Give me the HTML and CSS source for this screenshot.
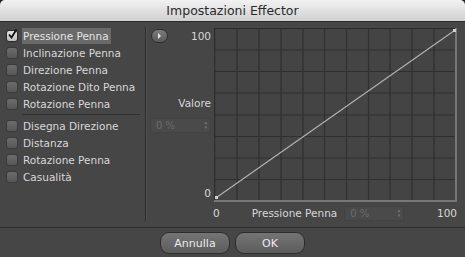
FILE: index.html
```html
<!DOCTYPE html>
<html lang="it">
<head>
    <meta charset="UTF-8">
    <title>Impostazioni Effector</title>
    <link rel="stylesheet" href="styles.css">
</head>
<body>
    <div class="window">
        <div class="titlebar">Impostazioni Effector</div>

        <div class="main">
            <div class="options">
                <div class="option active">
                    <span class="check checked">
                        <svg width="13" height="13" viewBox="0 0 13 13"><path d="M3 6.5 L5.5 9.5 L10.5 1.5" fill="none" stroke="#111" stroke-width="1.8"/></svg>
                    </span>
                    <span class="name">Pressione Penna</span>
                </div>
                <div class="option"><span class="check"></span><span class="name">Inclinazione Penna</span></div>
                <div class="option"><span class="check"></span><span class="name">Direzione Penna</span></div>
                <div class="option"><span class="check"></span><span class="name">Rotazione Dito Penna</span></div>
                <div class="option"><span class="check"></span><span class="name">Rotazione Penna</span></div>
                <div class="divider"></div>
                <div class="option"><span class="check"></span><span class="name">Disegna Direzione</span></div>
                <div class="option"><span class="check"></span><span class="name">Distanza</span></div>
                <div class="option"><span class="check"></span><span class="name">Rotazione Penna</span></div>
                <div class="option"><span class="check"></span><span class="name">Casualità</span></div>
            </div>

            <div class="curve">
                <div class="y-axis">
                    <div class="y-top">
                        <button class="play"><svg width="5" height="6" viewBox="0 0 5 6"><path d="M1 0 L4 3 L1 6 Z" fill="#e6e6e6"/></svg></button>
                        <span>100</span>
                    </div>
                    <div class="y-label">Valore</div>
                    <div class="field y-field">0 %<span class="stepper">&#x25B4;<br>&#x25BE;</span></div>
                    <div class="y-zero">0</div>
                </div>

                <svg class="plot" width="243" height="174" viewBox="0 0 243 174">
                    <rect x="0" y="0" width="243" height="174" fill="#444444"/>
                    <g stroke="#303030" stroke-width="1.2">
                        <line x1="23" y1="0" x2="23" y2="172"/>
                        <line x1="45" y1="0" x2="45" y2="172"/>
                        <line x1="67" y1="0" x2="67" y2="172"/>
                        <line x1="89" y1="0" x2="89" y2="172"/>
                        <line x1="110.5" y1="0" x2="110.5" y2="172"/>
                        <line x1="132.5" y1="0" x2="132.5" y2="172"/>
                        <line x1="154.5" y1="0" x2="154.5" y2="172"/>
                        <line x1="176" y1="0" x2="176" y2="172"/>
                        <line x1="198" y1="0" x2="198" y2="172"/>
                        <line x1="220" y1="0" x2="220" y2="172"/>
                        <line x1="0" y1="22" x2="241" y2="22"/>
                        <line x1="0" y1="43.5" x2="241" y2="43.5"/>
                        <line x1="0" y1="65" x2="241" y2="65"/>
                        <line x1="0" y1="87" x2="241" y2="87"/>
                        <line x1="0" y1="108.5" x2="241" y2="108.5"/>
                        <line x1="0" y1="130" x2="241" y2="130"/>
                        <line x1="0" y1="151.5" x2="241" y2="151.5"/>
                    </g>
                    <line x1="0" y1="0.5" x2="241" y2="0.5" stroke="#2c2c2c"/>
                    <line x1="0.5" y1="0" x2="0.5" y2="172" stroke="#2c2c2c" stroke-width="1.5"/>
                    <line x1="242" y1="0" x2="242" y2="174" stroke="#777777" stroke-width="2"/>
                    <line x1="0" y1="173" x2="243" y2="173" stroke="#777777" stroke-width="2"/>
                    <line x1="2.5" y1="169.5" x2="240.5" y2="2.5" stroke="#b4b4b4" stroke-width="1.1"/>
                    <rect x="1" y="168" width="3" height="3" fill="#d0d0d0"/>
                    <rect x="239" y="1" width="3" height="3" fill="#d0d0d0"/>
                </svg>

                <div class="x-axis">
                    <span class="x-zero">0</span>
                    <span class="x-label">Pressione Penna</span>
                    <div class="field x-field">0 %<span class="stepper">&#x25B4;<br>&#x25BE;</span></div>
                    <span class="x-max">100</span>
                </div>
            </div>
        </div>

        <div class="footer">
            <button class="btn">Annulla</button>
            <button class="btn">OK</button>
        </div>
    </div>
</body>
</html>
```

FILE: styles.css
```css
body {
    margin: 0;
    background-color: #222;
    font-family: 'DejaVu Sans', Verdana, sans-serif;
    font-size: 10.5px;
    color: #d8d8d8;
}
.window {
    width: 465px;
    height: 257px;
    background-color: #464646;
    border-radius: 5px 5px 0 0;
    overflow: hidden;
    display: flex;
    flex-direction: column;
}
.titlebar {
    height: 21px;
    line-height: 21px;
    text-align: center;
    font-size: 12.5px;
    color: #2a2a2a;
    background: linear-gradient(#f2f2f2, #d0d0d0);
    border-bottom: 1px solid #2a2a2a;
}
.main {
    height: 194px;
    padding: 6px 0 5px 0;
    display: flex;
}

/* left list of inputs */
.options {
    width: 146px;
    border-right: 1px solid #2e2e2e;
    box-shadow: 1px 0 0 #4f4f4f;
    padding-left: 6px;
    margin-top: -1px;
    box-sizing: border-box;
}
.option {
    height: 17px;
    display: flex;
    align-items: center;
}
.check {
    width: 12px;
    height: 12px;
    border-radius: 3px;
    border: 1px solid #3a3a3a;
    background: linear-gradient(#6c6c6c, #575757);
    box-sizing: border-box;
    margin-right: 4px;
    position: relative;
}
.check.checked {
    background: linear-gradient(#e4e4e4, #bdbdbd);
    border-color: #2a2a2a;
}
.check svg {
    position: absolute;
    left: -1px;
    top: -3px;
}
.name {
    padding: 0 2px 0 1px;
    line-height: 16px;
}
.option.active .name {
    background-color: #6a6a6a;
    color: #e4e4e4;
}
.divider {
    height: 1px;
    background-color: #2f2f2f;
    margin: 2px 5px 2px 16px;
}

/* curve editor */
.curve {
    display: grid;
    grid-template-columns: 68px 243px;
    grid-template-rows: 174px 20px;
}
.y-axis {
    display: flex;
    flex-direction: column;
    height: 172px;
}
.y-top {
    height: 15px;
    padding: 0 3px 0 5px;
    display: flex;
    justify-content: space-between;
    align-items: center;
}
.play {
    width: 17px;
    height: 14px;
    padding: 0;
    border: 1px solid #2e2e2e;
    border-radius: 7px;
    background: linear-gradient(#7c7c7c, #595959);
    display: flex;
    align-items: center;
    justify-content: center;
}
.y-label {
    margin-top: 54px;
    line-height: 13px;
    text-align: right;
    padding-right: 3px;
}
.field {
    height: 15px;
    box-sizing: border-box;
    background-color: #4a4a4a;
    border: 1px solid #424242;
    color: #6c6c6c;
    line-height: 13px;
    padding-left: 5px;
    display: flex;
    justify-content: space-between;
    font-size: 10px;
}
.stepper {
    font-size: 5px;
    line-height: 5px;
    padding: 1px 3px 0 0;
    color: #777;
}
.y-field {
    margin: 8px 3px 0 4px;
}
.y-zero {
    margin-top: auto;
    line-height: 13px;
    text-align: right;
    padding-right: 3px;
}
.plot {
    display: block;
}
.x-axis {
    grid-column: 2;
    display: flex;
    align-items: center;
    padding-top: 2px;
    height: 18px;
}
.x-zero {
    margin-left: -1px;
}
.x-label {
    margin-left: 32px;
}
.x-field {
    width: 60px;
    margin-left: 7px;
}
.x-max {
    margin-left: auto;
}

/* dialog buttons */
.footer {
    border-top: 1px solid #2c2c2c;
    padding-top: 4px;
    display: flex;
    justify-content: center;
    gap: 5px;
}
.btn {
    width: 70px;
    height: 22px;
    border: 1px solid #2c2c2c;
    border-radius: 9px;
    background: linear-gradient(#747474, #5c5c5c);
    color: #ececec;
    font-family: inherit;
    font-size: 11px;
    padding: 0;
}
```
